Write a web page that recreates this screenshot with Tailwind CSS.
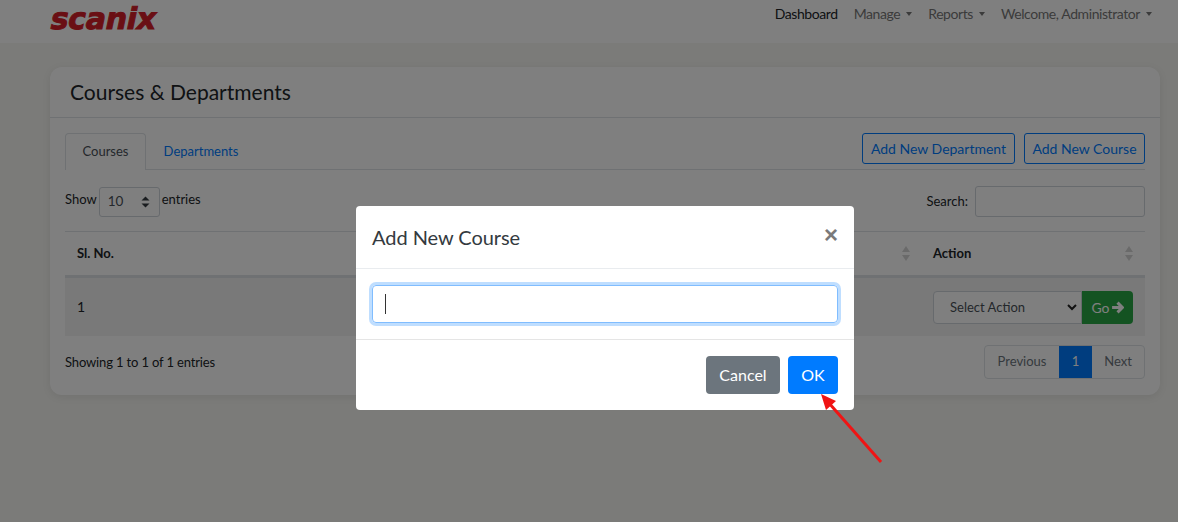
<!DOCTYPE html>
<html lang="en">
<head>
    <meta charset="UTF-8">
    <title>Courses &amp; Departments</title>
    <script src="https://cdn.jsdelivr.net/npm/@tailwindcss/browser@4"></script>
</head>
<body class="font-['Lato','Liberation_Sans',sans-serif] text-[14px] text-[#212529] bg-[#f6f6f2]">
<div class="relative h-[522px] w-[1178px] overflow-hidden">

    <!-- navbar -->
    <div class="flex h-[43px] items-start justify-between bg-white pl-[48px] pr-[26px] pt-[3px]">
        <div class="mt-[1px] -skew-x-12 font-['DejaVu_Sans',sans-serif] text-[30px] leading-none font-bold tracking-[-0.3px] text-[#d41f29] origin-bottom-left [-webkit-text-stroke:1px_#d41f29]">scanix</div>
        <div class="flex items-center gap-[16px] tracking-[-0.42px] text-[#777]">
            <span class="text-[#212529]">Dashboard</span>
            <span class="flex items-center gap-[6px]">Manage <i class="border-x-[3.5px] border-t-[4px] border-x-transparent border-t-[#777]"></i></span>
            <span class="flex items-center gap-[6px]">Reports <i class="border-x-[3.5px] border-t-[4px] border-x-transparent border-t-[#777]"></i></span>
            <span class="flex items-center gap-[6px]">Welcome, Administrator <i class="border-x-[3.5px] border-t-[4px] border-x-transparent border-t-[#777]"></i></span>
        </div>
    </div>

    <!-- card -->
    <div class="ml-[50px] mt-[24px] h-[328px] w-[1110px] rounded-[12px] bg-white shadow-[0_2px_8px_rgba(0,0,0,0.08)]">
        <div class="flex h-[51px] items-center border-b border-[#dee2e6] px-[20px] text-[21px]">Courses &amp; Departments</div>
        <div class="px-[15px] pt-[15px]">

            <div class="flex h-[37px] items-start justify-between border-b border-[#dee2e6]">
                <div class="flex">
                    <div class="flex h-[37px] w-[81px] items-center justify-center rounded-t-[4px] border border-b-0 border-[#dee2e6] bg-white text-[13px] text-[#495057]">Courses</div>
                    <div class="flex h-[37px] w-[110px] items-center justify-center text-[13px] text-[#007bff]">Departments</div>
                </div>
                <div class="flex gap-[9px]">
                    <div class="flex h-[31px] w-[153px] items-center justify-center rounded-[3px] border border-[#007bff] text-[#007bff]">Add New Department</div>
                    <div class="flex h-[31px] w-[121px] items-center justify-center rounded-[3px] border border-[#007bff] text-[#007bff]">Add New Course</div>
                </div>
            </div>

            <div class="mt-[16px] flex h-[31px] items-center justify-between text-[13px]">
                <div class="flex items-center gap-[2px]">
                    <span class="mt-[-3px]">Show</span>
                    <div class="flex h-[30px] w-[61px] items-center justify-between rounded-[3px] border border-[#ced4da] pl-[8px] pr-[9px] text-[#495057]">
                        <span class="text-[13.5px]">10</span>
                        <svg width="9" height="12" viewBox="0 0 9 12"><path d="M4.5 0.5L8.5 4.5H0.5ZM4.5 11.5L0.5 7.5H8.5Z" fill="#343a40"/></svg>
                    </div>
                    <span class="mt-[-3px]">entries</span>
                </div>
                <div class="flex items-center gap-[7px]">
                    <span>Search:</span>
                    <div class="h-[31px] w-[170px] rounded-[3px] border border-[#ced4da] bg-white"></div>
                </div>
            </div>

            <div class="mt-[14px] flex h-[47px] items-center justify-between border-y border-b-[3px] border-[#dee2e6] pl-[12px] text-[13px] font-bold">
                <span>Sl. No.</span>
                <div class="flex items-center">
                    <svg width="10" height="15" viewBox="0 0 10 15" class="mr-[22px]"><path d="M5 0L9 6H1ZM5 15L1 9H9Z" fill="#d5d5d5"/></svg>
                    <span class="w-[191px]">Action</span>
                    <svg width="10" height="15" viewBox="0 0 10 15" class="mr-[11px]"><path d="M5 0L9 6H1ZM5 15L1 9H9Z" fill="#d5d5d5"/></svg>
                </div>
            </div>

            <div class="flex h-[58px] items-center justify-between bg-[#f2f2f2] px-[12px]">
                <span class="mt-[-2px]">1</span>
                <div class="flex">
                    <div class="flex h-[33px] w-[149px] items-center justify-between rounded-l-[4px] border border-[#ced4da] bg-white pl-[16px] pr-[4px] pt-[1px] text-[13px] text-[#495057]">
                        <span>Select Action</span>
                        <svg width="10" height="7" viewBox="0 0 10 7"><path d="M1 1L5 5L9 1" fill="none" stroke="#222" stroke-width="2"/></svg>
                    </div>
                    <div class="flex h-[33px] w-[51px] items-center justify-center gap-[1px] rounded-r-[4px] bg-[#28a745] text-white">
                        <span>Go</span>
                        <svg width="13" height="13" viewBox="0 0 12 12"><path d="M1 6H10M6 1.5L10.5 6L6 10.5" fill="none" stroke="#fff" stroke-width="2.8"/></svg>
                    </div>
                </div>
            </div>

            <div class="mt-[9px] flex items-center justify-between text-[13px]">
                <span class="mt-[2px] tracking-[-0.15px]">Showing 1 to 1 of 1 entries</span>
                <div class="flex h-[34px] items-stretch rounded-[4px] border border-[#dee2e6] text-[#6c757d]">
                    <span class="flex w-[74px] items-center justify-center">Previous</span>
                    <span class="flex w-[33px] items-center justify-center bg-[#007bff] text-white">1</span>
                    <span class="flex w-[52px] items-center justify-center">Next</span>
                </div>
            </div>
        </div>
    </div>

    <!-- backdrop -->
    <div class="absolute inset-0 bg-black/50"></div>

    <!-- modal -->
    <div class="absolute left-[356px] top-[206px] h-[204px] w-[498px] rounded-[4px] bg-white">
        <div class="flex h-[63px] items-center justify-between border-b border-[#e9ecef] px-[16px]">
            <span class="text-[20px] tracking-[-0.05px] text-[#343a40]">Add New Course</span>
            <span class="mt-[-5px] font-['Liberation_Sans',sans-serif] text-[24px] leading-none font-bold text-[#7a7a7a]">×</span>
        </div>
        <div class="flex h-[71px] items-center border-b border-[#e5e5e5] px-[16px]">
            <div class="flex h-[38px] w-full items-center rounded-[4px] border border-[#80bdff] pl-[12px] shadow-[0_0_0_3px_rgba(0,123,255,0.25)]">
                <i class="h-[20px] w-px bg-[#333]"></i>
            </div>
        </div>
        <div class="flex justify-end gap-[8px] px-[16px] pt-[16px] text-[16px] text-white">
            <div class="flex h-[38px] w-[74px] items-center justify-center rounded-[4px] bg-[#6c757d]">Cancel</div>
            <div class="flex h-[38px] w-[50px] items-center justify-center rounded-[4px] bg-[#007bff]">OK</div>
        </div>
    </div>

    <!-- red arrow -->
    <svg class="absolute left-[810px] top-[385px]" width="80" height="85" viewBox="0 0 80 85">
        <path d="M71 77L18 17" stroke="#f01414" stroke-width="3" fill="none"/>
        <path d="M11 9L26 16L16 25Z" fill="#f01414"/>
    </svg>
</div>
</body>
</html>
